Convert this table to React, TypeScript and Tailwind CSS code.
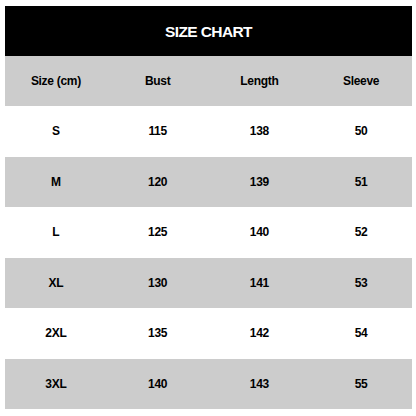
const rows = [
  ['S', '115', '138', '50'],
  ['M', '120', '139', '51'],
  ['L', '125', '140', '52'],
  ['XL', '130', '141', '53'],
  ['2XL', '135', '142', '54'],
  ['3XL', '140', '143', '55'],
]

const head = ['Size (cm)', 'Bust', 'Length', 'Sleeve']

export default function App() {
  return (
    <div
      className="w-[416px] h-[416px] bg-white pt-[6px] pl-[5px] text-black"
      style={{ fontFamily: '"Liberation Sans", Arial, sans-serif' }}
    >
      <div className="w-[407px] flex flex-col">
        <div className="h-[50px] bg-black text-white font-bold text-[15.5px] tracking-[-0.6px] flex items-center justify-center pt-[1px]">
          SIZE CHART
        </div>
        <div className="h-[50px] bg-[#cccccc] grid grid-cols-4 items-center text-center font-bold text-[12px] tracking-[-0.3px]">
          {head.map((h) => (
            <div key={h}>{h}</div>
          ))}
        </div>
        {rows.map((r, i) => (
          <div
            key={r[0]}
            className={`h-[50.5px] grid grid-cols-4 items-center text-center font-bold text-[12px] tracking-[-0.3px] ${
              i % 2 === 1 ? 'bg-[#cccccc]' : 'bg-white'
            }`}
          >
            {r.map((c, j) => (
              <div key={j}>{c}</div>
            ))}
          </div>
        ))}
      </div>
    </div>
  )
}
